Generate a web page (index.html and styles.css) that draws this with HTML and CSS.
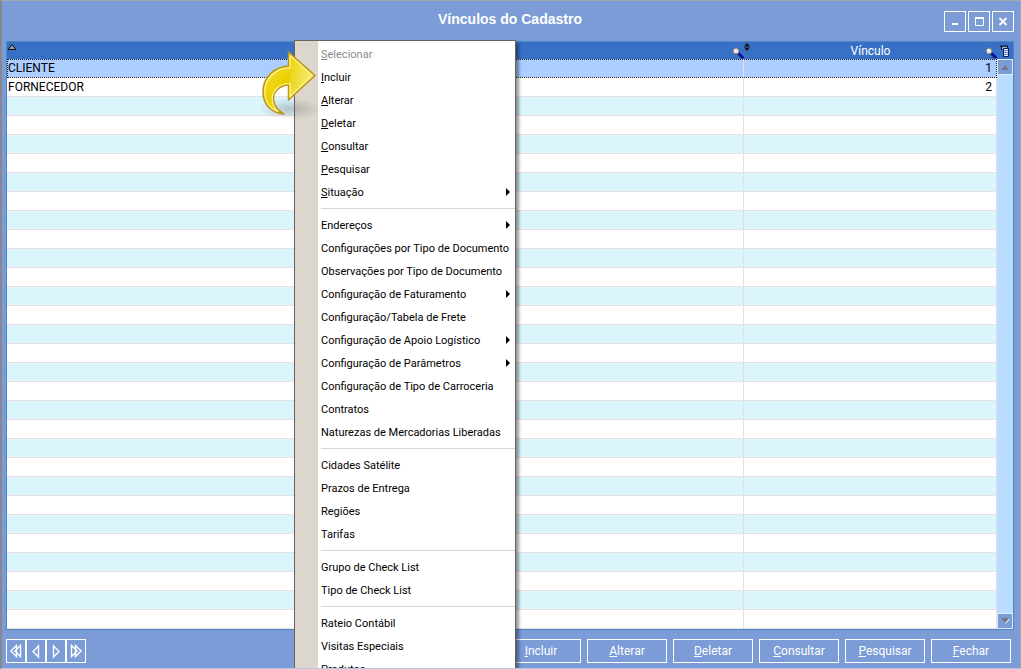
FILE: index.html
```
<!DOCTYPE html>
<html lang="pt-BR">
<head>
  <meta charset="UTF-8">
  <meta name="viewport" content="width=device-width, initial-scale=1.0">
  <title>Vínculos do Cadastro</title>
  <link rel="stylesheet" href="styles.css">
</head>
<body>
  <div class="window">
    <header class="titlebar">
      <h1>Vínculos do Cadastro</h1>
      <div class="window-buttons">
        <button class="window-button" aria-label="Minimizar">
          <svg width="20" height="19" viewBox="0 0 20 19"><path d="M7 12h6" stroke="#fff" stroke-width="2"/></svg>
        </button>
        <button class="window-button" aria-label="Maximizar">
          <svg width="20" height="19" viewBox="0 0 20 19"><path d="M6.500 5.500h8v8h-8z" stroke="#fff" fill="none"/><path d="M6 6h9" stroke="#fff" stroke-width="2"/></svg>
        </button>
        <button class="window-button" aria-label="Fechar janela">
          <svg width="20" height="19" viewBox="0 0 20 19"><path d="M6.500 6l7 7M13.500 6l-7 7" stroke="#fff" stroke-width="1.800"/></svg>
        </button>
      </div>
    </header>

    <main class="grid">
      <table class="records">
        <colgroup><col><col class="col-code"></colgroup>
        <thead>
          <tr>
            <th aria-label="Descrição">
              <div class="head">
                <svg class="sort" width="10" height="7" viewBox="0 0 10 7"><path d="M1 6.500L5 1.500l4 5z" fill="#999" stroke="#111"/></svg>
                <svg class="lens" width="12" height="12" viewBox="0 0 12 12"><path d="M6 5.500l5.500 5.500" stroke="#0808b8" stroke-width="2"/><path d="M5.500 7l4.500 4.500" stroke="#111"/><circle cx="4" cy="4" r="3" fill="#e4e4e4" stroke="#778"/><path d="M2.500 4l1.500-1.500" stroke="#fff"/></svg>
              </div>
            </th>
            <th>
              <div class="head">
                <svg class="sort" width="6" height="8" viewBox="0 0 6 8"><path d="M0 3.500L3 0l3 3.500zM0 4.500L3 8l3-3.500z" fill="#111"/></svg>
                <span>Vínculo</span>
                <svg class="lens" width="12" height="12" viewBox="0 0 12 12"><path d="M6 5.500l5.500 5.500" stroke="#0808b8" stroke-width="2"/><path d="M5.500 7l4.500 4.500" stroke="#111"/><circle cx="4" cy="4" r="3" fill="#e4e4e4" stroke="#778"/><path d="M2.500 4l1.500-1.500" stroke="#fff"/></svg>
              </div>
            </th>
          </tr>
        </thead>
        <tbody>
          <tr class="selected"><td>CLIENTE</td><td>1</td></tr>
          <tr><td>FORNECEDOR</td><td>2</td></tr>
          <tr><td></td><td></td></tr>
          <tr><td></td><td></td></tr>
          <tr><td></td><td></td></tr>
          <tr><td></td><td></td></tr>
          <tr><td></td><td></td></tr>
          <tr><td></td><td></td></tr>
          <tr><td></td><td></td></tr>
          <tr><td></td><td></td></tr>
          <tr><td></td><td></td></tr>
          <tr><td></td><td></td></tr>
          <tr><td></td><td></td></tr>
          <tr><td></td><td></td></tr>
          <tr><td></td><td></td></tr>
          <tr><td></td><td></td></tr>
          <tr><td></td><td></td></tr>
          <tr><td></td><td></td></tr>
          <tr><td></td><td></td></tr>
          <tr><td></td><td></td></tr>
          <tr><td></td><td></td></tr>
          <tr><td></td><td></td></tr>
          <tr><td></td><td></td></tr>
          <tr><td></td><td></td></tr>
          <tr><td></td><td></td></tr>
          <tr><td></td><td></td></tr>
          <tr><td></td><td></td></tr>
          <tr><td></td><td></td></tr>
          <tr><td></td><td></td></tr>
          <tr><td></td><td></td></tr>
        </tbody>
      </table>
      <div class="side">
        <button class="columns-button" aria-label="Colunas">
          <svg width="12" height="14" viewBox="0 0 12 14"><path d="M1 2h8M2.500 2v4M8.500 2v2" stroke="#111" fill="none"/><path d="M3 3h5v2H3z" fill="#9db4e8"/><path d="M4.500 4.500h5v8h-5z" fill="#e4ebff" stroke="#111a55"/><path d="M5 6.500h4M5 8.500h4M5 10.500h4" stroke="#6f83c8"/></svg>
        </button>
        <button class="scroll-button" aria-label="Rolar para cima">
          <svg width="8" height="5" viewBox="0 0 8 5"><path d="M0 5l4-4.500L8 5z" fill="#777"/></svg>
        </button>
        <div class="track"></div>
        <button class="scroll-button" aria-label="Rolar para baixo">
          <svg width="9" height="6" viewBox="0 0 9 6"><path d="M4.500 5.500L8.500 1" stroke="#fff"/><path d="M0 0h8L4 4.500z" fill="#777"/></svg>
        </button>
      </div>
    </main>

    <footer class="footer">
      <div class="pager">
        <button aria-label="Primeiro"><svg width="18" height="22" viewBox="0 0 18 22"><path d="M9.500 5.500v11L4 11zM13.500 5.500v11L8 11z"/></svg></button>
        <button aria-label="Anterior"><svg width="18" height="22" viewBox="0 0 18 22"><path d="M11.500 6v11L6 11.500z"/></svg></button>
        <button aria-label="Próximo"><svg width="18" height="22" viewBox="0 0 18 22"><path d="M6.500 6v11l5.500-5.500z"/></svg></button>
        <button aria-label="Último"><svg width="18" height="22" viewBox="0 0 18 22"><path d="M4.500 5.500v11L10 11zM8.500 5.500v11L14 11z"/></svg></button>
      </div>
      <div class="actions">
        <button><u>I</u>ncluir</button>
        <button><u>A</u>lterar</button>
        <button><u>D</u>eletar</button>
        <button><u>C</u>onsultar</button>
        <button><u>P</u>esquisar</button>
        <button><u>F</u>echar</button>
      </div>
    </footer>

    <!-- context menu -->
    <div class="menu" role="menu">
      <button class="item" role="menuitem" disabled><u>S</u>elecionar</button>
      <button class="item" role="menuitem"><u>I</u>ncluir</button>
      <button class="item" role="menuitem"><u>A</u>lterar</button>
      <button class="item" role="menuitem"><u>D</u>eletar</button>
      <button class="item" role="menuitem"><u>C</u>onsultar</button>
      <button class="item" role="menuitem"><u>P</u>esquisar</button>
      <button class="item submenu" role="menuitem"><u>S</u>ituação</button>
      <hr>
      <button class="item submenu" role="menuitem">Endereços</button>
      <button class="item" role="menuitem">Configurações por Tipo de Documento</button>
      <button class="item" role="menuitem">Observações por Tipo de Documento</button>
      <button class="item submenu" role="menuitem">Configuração de Faturamento</button>
      <button class="item" role="menuitem">Configuração/Tabela de Frete</button>
      <button class="item submenu" role="menuitem">Configuração de Apoio Logístico</button>
      <button class="item submenu" role="menuitem">Configuração de Parâmetros</button>
      <button class="item" role="menuitem">Configuração de Tipo de Carroceria</button>
      <button class="item" role="menuitem">Contratos</button>
      <button class="item" role="menuitem">Naturezas de Mercadorias Liberadas</button>
      <hr>
      <button class="item" role="menuitem">Cidades Satélite</button>
      <button class="item" role="menuitem">Prazos de Entrega</button>
      <button class="item" role="menuitem">Regiões</button>
      <button class="item" role="menuitem">Tarifas</button>
      <hr>
      <button class="item" role="menuitem">Grupo de Check List</button>
      <button class="item" role="menuitem">Tipo de Check List</button>
      <hr>
      <button class="item" role="menuitem">Rateio Contábil</button>
      <button class="item" role="menuitem">Visitas Especiais</button>
      <button class="item" role="menuitem">Produtos</button>
    </div>

    <!-- arrow pointing at "Incluir" -->
    <svg class="pointer" width="64" height="76" viewBox="0 0 64 76">
      <defs>
        <linearGradient id="gold" x1="0" y1="0" x2="1" y2="1">
          <stop offset="0" stop-color="#f6e650"/>
          <stop offset="0.450" stop-color="#ead000"/>
          <stop offset="1" stop-color="#f2dc30"/>
        </linearGradient>
        <linearGradient id="tip" x1="0" y1="0" x2="1" y2="0.300">
          <stop offset="0" stop-color="#ecd20c"/>
          <stop offset="1" stop-color="#f6ea70"/>
        </linearGradient>
        <radialGradient id="shade">
          <stop offset="0" stop-color="#555" stop-opacity="0.300"/>
          <stop offset="1" stop-color="#555" stop-opacity="0"/>
        </radialGradient>
      </defs>
      <ellipse cx="30" cy="60" rx="32" ry="11" fill="url(#shade)"/>
      <path d="M28.500 3L55 26.500 28.500 51V36C17 37 12 45 14 53c1 5 5 9 10 12C12 64 3 56 3 43 3 28 14 18 28.500 17z" fill="url(#gold)" stroke="#b8951c" stroke-width="1.500" stroke-linejoin="round"/>
      <path d="M30 7l22 19.500L30 47z" fill="url(#tip)"/>
      <path d="M30 6.500L52.500 26.500 30 47.500V34.500C18 34.500 10.500 43 12.500 53c.8 4 3 7.500 5.500 9.500C10 60 4.800 52 4.800 43 4.800 29 16 19 30 18.800z" fill="none" stroke="#fdf294" stroke-width="1.200"/>
    </svg>
  </div>
</body>
</html>
```
FILE: styles.css
```
* {
  box-sizing: border-box;
}

body {
  margin: 0;
  font-family: Roboto, "Liberation Sans", sans-serif;
  font-size: 12px;
  background: #7b9cd6;
}

button {
  font: inherit;
  color: inherit;
  background: none;
  border: none;
  padding: 0;
  cursor: pointer;
}

.window {
  position: relative;
  display: flex;
  flex-direction: column;
  min-height: 100vh;
  max-height: 100vh;
  overflow: hidden;
  padding: 0 6px 0 4px;
  border: 1px solid #a3a7ae;
  border-left: 2px solid #85888f;
  border-bottom-color: #b4c8ea;
  background: #7b9cd6;
}

/* Title bar */
.titlebar {
  display: grid;
  grid-template-columns: 1fr auto 1fr;
  align-items: center;
  height: 40px;
  flex-shrink: 0;
}

.titlebar h1 {
  grid-column: 2;
  margin: 0;
  padding-bottom: 4px;
  font-family: "Liberation Sans", Arial, sans-serif;
  font-size: 14px;
  color: #fff;
}

.window-buttons {
  justify-self: end;
  display: flex;
  gap: 2px;
}

.window-button {
  display: flex;
  border: 1px solid #fff;
}

/* Grid */
.grid {
  display: flex;
  border: 1px solid #4a86c8;
  background: #fff;
}

.records {
  flex: 1;
  border-spacing: 0;
  table-layout: fixed;
}

.col-code {
  width: 253px;
}

.records th {
  height: 17px;
  padding: 0;
  background: #3870c6;
  color: #fff;
  font-weight: normal;
}

.head {
  display: flex;
  justify-content: center;
  height: 17px;
  line-height: 18px;
}

.head span {
  padding-left: 6px;
}

.sort {
  margin: 1px auto 0 0;
}

.lens {
  margin: 5px 0 0 auto;
}

.records td {
  height: 19px;
  padding: 1px 1px 0;
  line-height: 17px;
  border-right: 1px solid #e4dfe4;
  border-bottom: 1px solid #eadfe3;
}

.records td:last-child {
  padding-right: 4px;
  text-align: right;
}

.records tbody tr:nth-child(odd) {
  background: #dbf5fd;
}

.records tbody tr.selected {
  background: #abcdff;
  outline: 1px dotted #222;
  outline-offset: -1px;
}

.side {
  display: flex;
  flex-direction: column;
  width: 16px;
  background: #b9dcff;
}

.columns-button {
  height: 17px;
  background: #3870c6;
}

.columns-button svg {
  display: block;
  margin: 1px auto;
}

.scroll-button {
  display: flex;
  align-items: center;
  justify-content: center;
  height: 16px;
  border: 1px solid #dceaff;
  background: #7b9cd6;
}

.track {
  flex: 1;
}

/* Footer */
.footer {
  display: flex;
  justify-content: space-between;
  align-items: center;
  padding: 9px 3px 5px 0;
  color: #fff;
}

.pager,
.actions {
  display: flex;
}

.actions {
  gap: 6px;
}

.pager button,
.actions button {
  height: 24px;
  border: 1px solid #fff;
}

.pager svg {
  display: block;
  fill: none;
  stroke: #fff;
  stroke-width: 1.4;
}

.actions button {
  width: 80px;
}

/* Context menu */
.menu {
  position: absolute;
  top: 39px;
  left: 292px;
  width: 222px;
  display: flex;
  flex-direction: column;
  padding: 1px 0 1px 23px;
  border: 1px solid #66635e;
  background: linear-gradient(to right, #ddd6cd 23px, #fff 23px);
  box-shadow: 3px 3px 3px rgba(0, 0, 0, 0.4);
  font-size: 11px;
}

.item {
  display: flex;
  align-items: center;
  height: 23px;
  padding: 1px 5px 0 3px;
  white-space: pre;
}

.item:disabled {
  color: #8c8c8c;
}

.item:not(:disabled):hover {
  background: #c1d2ee;
}

.submenu::after {
  content: "";
  margin-left: auto;
  border: 4px solid transparent;
  border-left-color: #000;
  border-right-width: 0;
}

.menu hr {
  width: calc(100% - 3px);
  margin: 5px 0 4px 3px;
  border: none;
  border-top: 1px solid #ddd6cd;
}

.pointer {
  position: absolute;
  top: 48px;
  left: 258px;
  pointer-events: none;
}
```
